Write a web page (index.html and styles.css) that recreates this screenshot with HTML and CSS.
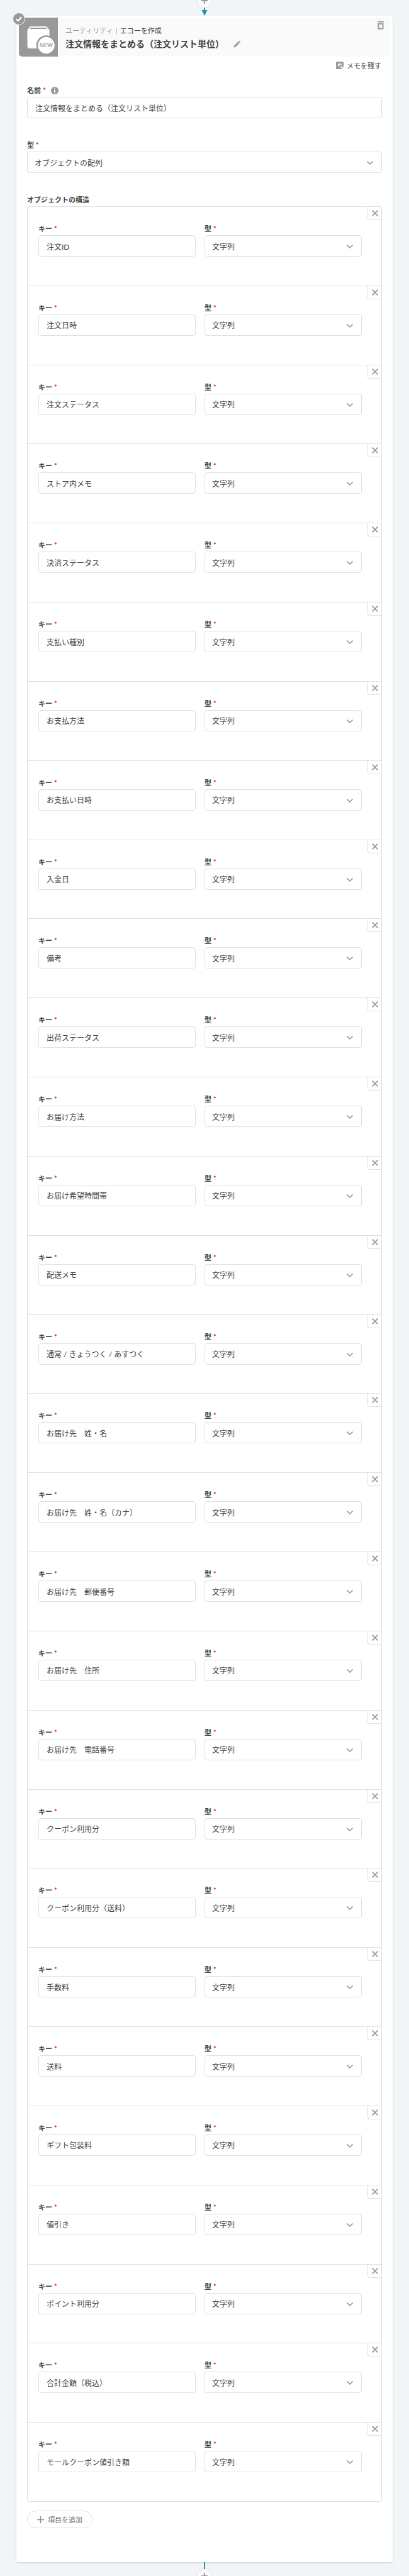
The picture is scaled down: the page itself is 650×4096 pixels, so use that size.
FILE: index.html
```html
<!DOCTYPE html>
<html lang="ja">
<head>
<meta charset="UTF-8" />
<meta name="viewport" content="width=device-width, initial-scale=1" />
<title>注文情報をまとめる（注文リスト単位）</title>
<link rel="stylesheet" href="styles.css">
</head>
<body>

<div class="connector connector-top">
  <button class="step-add" type="button" aria-label="ステップを追加">
    <svg width="10" height="10" viewBox="0 0 10 10"><path d="M5 0v10M0 5h10" /></svg>
  </button>
  <svg class="arrow" width="10" height="13" viewBox="0 0 10 13"><path d="M4 0h2v4h3.5L5 13 0.5 4H4z" /></svg>
</div>

<main class="card">
  <header class="card-header">
    <div class="app-icon">
      <svg width="62" height="62" viewBox="0 0 62 62">
        <path d="M18 14h26l4.500 5.500V45a4 4 0 0 1-4 4h-27a4 4 0 0 1-4-4V19.500z" fill="#fff" />
        <path d="M18 17h26" stroke="#999" stroke-width="2" />
        <circle cx="43.500" cy="44" r="14.500" fill="#fff" stroke="#999" stroke-width="2.500" />
        <text x="43.500" y="47" text-anchor="middle">NEW</text>
      </svg>
      <span class="check">
        <svg width="12" height="12" viewBox="0 0 12 12"><path d="M2 6.500l2.800 2.500L10 3.200" /></svg>
      </span>
    </div>
    <div class="heading">
      <div class="breadcrumb">
        <span class="category">ユーティリティ</span>
        <span class="divider"></span>
        <span>エコーを作成</span>
      </div>
      <div class="title-row">
        <h1>注文情報をまとめる（注文リスト単位）</h1>
        <button class="icon-btn" type="button" aria-label="名前を編集">
          <svg width="14" height="14" viewBox="0 0 24 24"><path d="M3 17.250V21h3.750L17.810 9.940l-3.750-3.750L3 17.250zM20.710 7.040a1 1 0 0 0 0-1.410l-2.340-2.340a1 1 0 0 0-1.410 0l-1.830 1.830 3.750 3.750 1.830-1.830z" /></svg>
        </button>
      </div>
    </div>
    <button class="icon-btn delete-btn" type="button" aria-label="削除">
      <svg width="12" height="14" viewBox="0 0 12 14"><path fill-rule="evenodd" d="M1 1h3l1-1h2l1 1h3v1.500H1zM1.500 4h9v8.500a1.200 1.200 0 0 1-1.200 1.200H2.700a1.200 1.200 0 0 1-1.200-1.200zM3.500 5.800v6h5v-6z" /></svg>
    </button>
  </header>

  <div class="card-body">
    <button class="memo-btn" type="button">
      <svg width="16" height="16" viewBox="0 0 24 24"><path d="M19 3H5a2 2 0 0 0-2 2v14a2 2 0 0 0 2 2h10l6-6V5a2 2 0 0 0-2-2zM7 8h10v2H7V8zm5 6H7v-2h5v2zm2 5.500V14h5.500L14 19.500z" /></svg>
      メモを残す
    </button>

    <div class="field">
      <label for="echo-name">名前<span class="required">*</span>
        <svg class="info" width="12" height="12" viewBox="0 0 12 12"><circle cx="6" cy="6" r="6" fill="#999" /><path d="M5 2.500h2v1.500H5zM5 5h2v4.500H5z" fill="#fff" /></svg>
      </label>
      <input id="echo-name" type="text" value="注文情報をまとめる（注文リスト単位）">
    </div>

    <div class="field">
      <label for="echo-type">型<span class="required">*</span></label>
      <div class="select">
        <select id="echo-type">
          <option>オブジェクトの配列</option>
        </select>
        <svg width="10" height="6" viewBox="0 0 10 6"><path d="M0.500 0.500L5 5l4.500-4.500" /></svg>
      </div>
    </div>

    <h2>オブジェクトの構造</h2>
    <div id="items" class="items"></div>

    <button class="add-btn" type="button">
      <svg width="11" height="11" viewBox="0 0 11 11"><path d="M5.500 0v11M0 5.500h11" /></svg>
      項目を追加
    </button>
  </div>
</main>

<div class="connector connector-bottom">
  <div class="line"></div>
  <button class="step-add" type="button" aria-label="ステップを追加">
    <svg width="10" height="10" viewBox="0 0 10 10"><path d="M5 0v10M0 5h10" /></svg>
  </button>
</div>

<template id="item-template">
  <div class="item">
    <div class="field">
      <label class="key-label">キー<span class="required">*</span></label>
      <input class="key-input" type="text">
    </div>
    <div class="field">
      <label class="type-label">型<span class="required">*</span></label>
      <div class="select">
        <select class="type-select">
          <option>文字列</option>
        </select>
        <svg width="10" height="6" viewBox="0 0 10 6"><path d="M0.500 0.500L5 5l4.500-4.500" /></svg>
      </div>
    </div>
    <button class="remove-btn" type="button" aria-label="項目を削除">
      <svg width="10" height="10" viewBox="0 0 10 10"><path d="M0.500 0.500l9 9M9.500 0.500l-9 9" /></svg>
    </button>
  </div>
</template>

<script>
const keys = [
  '注文ID',
  '注文日時',
  '注文ステータス',
  'ストア内メモ',
  '決済ステータス',
  '支払い種別',
  'お支払方法',
  'お支払い日時',
  '入金日',
  '備考',
  '出荷ステータス',
  'お届け方法',
  'お届け希望時間帯',
  '配送メモ',
  '通常 / きょうつく / あすつく',
  'お届け先　姓・名',
  'お届け先　姓・名（カナ）',
  'お届け先　郵便番号',
  'お届け先　住所',
  'お届け先　電話番号',
  'クーポン利用分',
  'クーポン利用分（送料）',
  '手数料',
  '送料',
  'ギフト包装料',
  '値引き',
  'ポイント利用分',
  '合計金額（税込）',
  'モールクーポン値引き額'
];

const items = document.getElementById('items');
const template = document.getElementById('item-template');
let count = 0;

function addItem(key) {
  const item = template.content.cloneNode(true).firstElementChild;
  const input = item.querySelector('.key-input');
  const select = item.querySelector('.type-select');
  count++;

  input.id = 'key-' + count;
  input.value = key;
  item.querySelector('.key-label').htmlFor = input.id;
  select.id = 'type-' + count;
  item.querySelector('.type-label').htmlFor = select.id;

  item.querySelector('.remove-btn').addEventListener('click', () => item.remove());
  items.appendChild(item);
}

keys.forEach(addItem);
document.querySelector('.add-btn').addEventListener('click', () => addItem(''));
</script>

</body>
</html>
```
FILE: styles.css
```css
* {
  box-sizing: border-box;
}
body {
  margin: 0;
  padding: 0 26px;
  min-height: 100vh;
  display: flex;
  flex-direction: column;
  background: #f1f5f8;
  color: #444;
  font-family: Lato, "Noto Sans CJK JP", sans-serif;
  font-size: 12px;
}
button, input, select {
  font-family: inherit;
  color: inherit;
}
button {
  padding: 0;
  border: none;
  background: none;
  cursor: pointer;
}
svg {
  display: block;
  flex: none;
}

/* Connectors above and below the card */
.connector {
  display: flex;
  flex-direction: column;
  align-items: center;
  overflow: hidden;
  flex: none;
}
.connector-top {
  height: 25px;
  justify-content: flex-end;
}
.connector-bottom {
  height: 22px;
}
.arrow {
  fill: #218fb8;
}
.line {
  flex: none;
  width: 2px;
  height: 11px;
  background: #218fb8;
}
.step-add {
  flex: none;
  display: flex;
  align-items: center;
  justify-content: center;
  width: 22px;
  height: 22px;
  border-radius: 50%;
  background: #fafafa;
  box-shadow: 0 0 3px rgba(0,0,0,0.15);
}
.step-add svg {
  stroke: #999;
  stroke-width: 2;
}

/* Card */
.card {
  flex: 1;
  display: flex;
  flex-direction: column;
  padding: 3px 4px 0;
  background: #fff;
  border-radius: 3px;
  box-shadow: 0 1px 3px rgba(0,0,0,0.16);
}
.card-header {
  display: flex;
  height: 62px;
  background: #fafafa;
  border-radius: 5px;
}
.app-icon {
  position: relative;
  flex: none;
  width: 62px;
  height: 62px;
  background: #999;
  border-radius: 5px 0 0 5px;
}
.app-icon text {
  font-size: 9px;
  fill: #999;
  stroke: #999;
  stroke-width: 0.2;
}
.check {
  position: absolute;
  top: -8px;
  left: -10px;
  display: flex;
  align-items: center;
  justify-content: center;
  width: 20px;
  height: 20px;
  border: 1px solid #f1f5f8;
  border-radius: 50%;
  background: #999;
}
.check path {
  fill: none;
  stroke: #fff;
  stroke-width: 2.5;
}
.heading {
  flex: 1;
  padding: 13px 0 0 12px;
}
.breadcrumb {
  display: flex;
  align-items: center;
  gap: 5px;
  font-size: 11px;
  line-height: 16px;
}
.category {
  color: #999;
}
.divider {
  width: 1px;
  height: 9px;
  background: #b3b3b3;
}
.title-row {
  display: flex;
  align-items: center;
  gap: 14px;
  margin-top: 3px;
}
h1 {
  margin: 0;
  font-size: 14px;
  line-height: 20px;
}
.icon-btn svg {
  fill: #999;
}
.delete-btn {
  align-self: flex-start;
  margin: 5px 9px 0 0;
}

/* Form */
.card-body {
  flex: 1;
  display: flex;
  flex-direction: column;
  padding: 0 13px 54px;
}
.memo-btn {
  display: flex;
  align-items: center;
  align-self: flex-end;
  gap: 3px;
  height: 20px;
  margin: 4px 1px 21px 0;
  font-size: 11px;
}
.memo-btn svg {
  fill: #999;
}
.field {
  margin-bottom: 34px;
}
label, h2 {
  display: flex;
  align-items: center;
  margin: 0 0 1px;
  font-size: 11px;
  font-weight: 700;
  line-height: 18px;
}
.required {
  margin-left: 3px;
  color: #e32119;
}
.info {
  margin-left: 8px;
}
input, select {
  display: block;
  width: 100%;
  height: 34px;
  padding: 0 12px;
  border: 1px solid #e0e0e0;
  border-radius: 4px;
  background: #fff;
  font-size: 12px;
}
input:focus, select:focus {
  border-color: #218fb8;
  outline: none;
}
.select {
  position: relative;
}
select {
  appearance: none;
  padding: 2px 32px 0 11px;
}
.select svg {
  position: absolute;
  top: 15px;
  right: 14px;
  pointer-events: none;
}
.select path {
  fill: none;
  stroke: #999;
  stroke-width: 1.6;
}

/* Object structure list */
.items {
  flex: 1;
  display: grid;
  grid-auto-rows: 1fr;
  border: 1px solid #e0e0e0;
  border-bottom: none;
  border-radius: 4px;
}
.item {
  position: relative;
  display: grid;
  grid-template-columns: 1fr 1fr;
  align-items: start;
  gap: 14px;
  padding: 26px 31px 45px 17px;
  border-bottom: 1px solid #e0e0e0;
}
.item:last-child {
  border-radius: 0 0 4px 4px;
}
.item .field {
  margin-bottom: 0;
}
.remove-btn {
  position: absolute;
  top: 0;
  right: 0;
  display: flex;
  align-items: center;
  justify-content: center;
  width: 22px;
  height: 21px;
  border: 1px solid #e0e0e0;
  border-width: 0 0 1px 1px;
  border-bottom-left-radius: 4px;
}
.remove-btn svg {
  stroke: #999;
  stroke-width: 1.8;
}
.add-btn {
  display: flex;
  align-items: center;
  justify-content: center;
  align-self: flex-start;
  gap: 6px;
  width: 104px;
  height: 28px;
  margin-top: 14px;
  border: 1px solid #e0e0e0;
  border-radius: 14px;
  color: #8c8c8c;
  font-size: 11px;
  font-weight: 500;
}
.add-btn svg {
  stroke: #8c8c8c;
  stroke-width: 1.4;
}
```
